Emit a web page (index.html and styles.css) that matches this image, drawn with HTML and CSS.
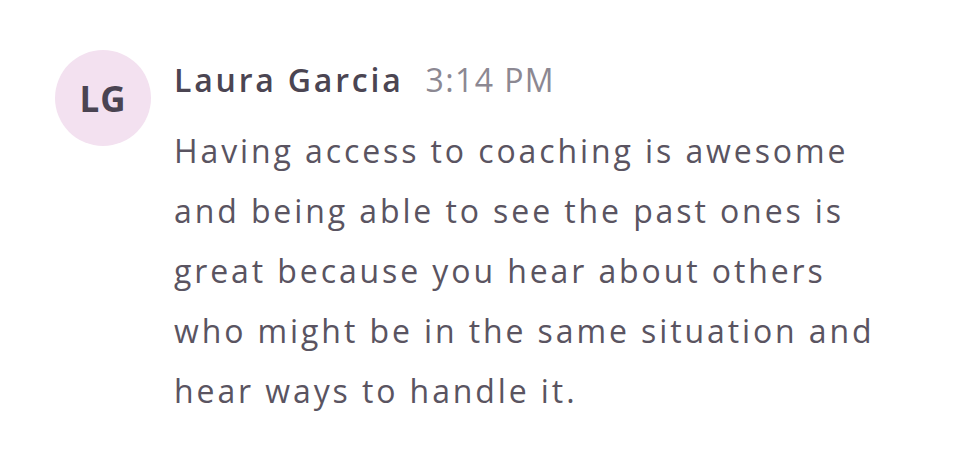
FILE: index.html
```html
<!DOCTYPE html>
<html>
<head>
<meta charset="utf-8">
<link rel="stylesheet" href="styles.css">
</head>
<body>
<div class="message">
  <div class="avatar">LG</div>
  <div class="content">
    <div class="header">
      <span class="name">Laura Garcia</span>
      <span class="time">3:14 PM</span>
    </div>
    <p class="text">Having access to coaching is awesome<br>and being able to see the past ones is<br>great because you hear about others<br>who might be in the same situation and<br>hear ways to handle it.</p>
  </div>
</div>
</body>
</html>
```
FILE: styles.css
```css
html, body {
  margin: 0;
  padding: 0;
  background: #ffffff;
}
body {
  font-family: "Open Sans", "Noto Sans", sans-serif;
  width: 960px;
  height: 452px;
  overflow: hidden;
}
.message {
  display: flex;
  align-items: flex-start;
  gap: 23px;
  padding: 50px 0 0 55px;
}
.avatar {
  flex: 0 0 96px;
  width: 96px;
  height: 96px;
  border-radius: 50%;
  background: #f3e1f0;
  color: #4a4452;
  font-weight: 700;
  font-size: 35px;
  letter-spacing: 1px;
  display: flex;
  align-items: center;
  justify-content: center;
}
.content {
  width: 780px;
}
.header {
  display: flex;
  align-items: baseline;
  gap: 22px;
  height: 60px;
  line-height: 60px;
}
.name {
  font-size: 32px;
  font-weight: 600;
  letter-spacing: 2.8px;
  color: #4b4552;
}
.time {
  font-size: 32px;
  letter-spacing: 1.4px;
  color: #8c8892;
}
.text {
  margin: 11px 0 0;
  font-size: 32px;
  letter-spacing: 2.9px;
  line-height: 60px;
  color: #5a5461;
  white-space: nowrap;
}
```
